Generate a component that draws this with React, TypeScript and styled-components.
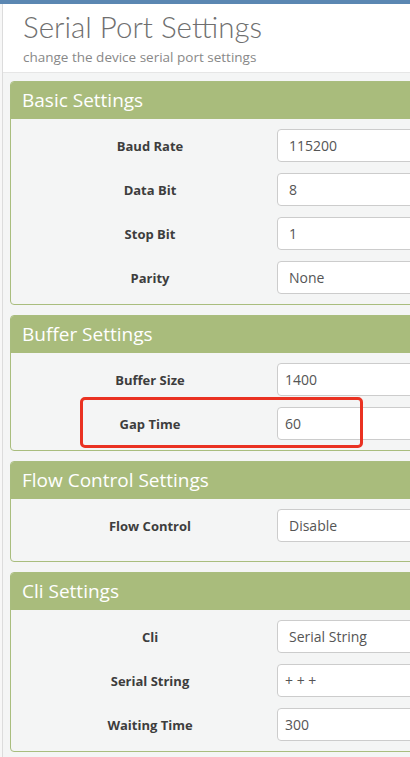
import React from "react";
import styled, { createGlobalStyle } from "styled-components";

const GlobalStyle = createGlobalStyle`
  html, body {
    margin: 0;
    padding: 0;
    background: #f4f5f5;
    overflow: hidden;
    font-family: "Open Sans", "Noto Sans", sans-serif;
  }
  * { box-sizing: border-box; }
`;

const TopBar = styled.div`
  height: 4px;
  background: #5b87b2;
`;

const Layout = styled.div`
  display: flex;
  align-items: stretch;
  min-height: 753px;
`;

const SideStrip = styled.div`
  width: 3px;
  flex: 0 0 3px;
  background: #f7f7f7;
  border-right: 1px solid #dcdcdc;
`;

const Main = styled.main`
  flex: 1;
  min-width: 0;
  overflow: hidden;
`;

const PageHeader = styled.header`
  background: #ffffff;
  border-bottom: 1px solid #e6e6e6;
  height: 69px;
  padding: 3px 0 0 20px;
`;

const Title = styled.h1`
  margin: 0;
  font-family: "Lato", "Open Sans", sans-serif;
  font-weight: 300;
  font-size: 29.5px;
  line-height: 40px;
  color: #6f6f6f;
  white-space: nowrap;
`;

const Subtitle = styled.p`
  margin: 0;
  font-size: 13.5px;
  line-height: 20px;
  color: #888888;
  white-space: nowrap;
`;

const Content = styled.div`
  display: flex;
  flex-direction: column;
  gap: 10px;
  padding: 8px 0 0 7px;
`;

const Panel = styled.section`
  width: 440px;
  border: 1px solid #a9bd7e;
  border-radius: 4px;
  background: #f4f5f5;
  overflow: hidden;
`;

const PanelHeading = styled.h2`
  margin: 0;
  height: 37px;
  background: #a9bc7c;
  color: #ffffff;
  font-weight: 400;
  font-size: 19px;
  line-height: 37px;
  padding-left: 11px;
  white-space: nowrap;
`;

const PanelBody = styled.div<{ $extraBottom?: number }>`
  display: flex;
  flex-direction: column;
  gap: 11px;
  padding: 10px 0 ${(p) => 10 + (p.$extraBottom ?? 0)}px 12px;
`;

const Row = styled.div`
  position: relative;
  display: grid;
  grid-template-columns: 254px 200px;
  align-items: center;
  height: 33px;
`;

const Label = styled.label`
  text-align: center;
  font-weight: 700;
  font-size: 13px;
  color: #3d3d3d;
  white-space: nowrap;
`;

const Field = styled.div<{ $select?: boolean }>`
  height: 33px;
  background: #ffffff;
  border: 1px solid #cccccc;
  border-radius: 4px;
  font-size: 14px;
  line-height: 31px;
  color: #555555;
  padding-left: ${(p) => (p.$select ? 11 : 7)}px;
  white-space: nowrap;
`;

const Highlight = styled.div`
  position: absolute;
  left: 57px;
  top: -10px;
  width: 283px;
  height: 51px;
  border: 3px solid #ea3222;
  border-radius: 5px;
  pointer-events: none;
`;

type RowData = { label: string; value: string; select?: boolean; highlight?: boolean };
type PanelData = { title: string; rows: RowData[]; extraBottom?: number };

const panels: PanelData[] = [
  {
    title: "Basic Settings",
    rows: [
      { label: "Baud Rate", value: "115200", select: true },
      { label: "Data Bit", value: "8", select: true },
      { label: "Stop Bit", value: "1", select: true },
      { label: "Parity", value: "None", select: true },
    ],
  },
  {
    title: "Buffer Settings",
    rows: [
      { label: "Buffer Size", value: "1400" },
      { label: "Gap Time", value: "60", highlight: true },
    ],
  },
  {
    title: "Flow Control Settings",
    rows: [{ label: "Flow Control", value: "Disable", select: true }],
    extraBottom: 9,
  },
  {
    title: "Cli Settings",
    rows: [
      { label: "Cli", value: "Serial String", select: true },
      { label: "Serial String", value: "+ + +" },
      { label: "Waiting Time", value: "300" },
    ],
  },
];

export default function App() {
  return (
    <>
      <GlobalStyle />
      <TopBar />
      <Layout>
        <SideStrip />
        <Main>
          <PageHeader>
            <Title>Serial Port Settings</Title>
            <Subtitle>change the device serial port settings</Subtitle>
          </PageHeader>
          <Content>
            {panels.map((panel) => (
              <Panel key={panel.title}>
                <PanelHeading>{panel.title}</PanelHeading>
                <PanelBody $extraBottom={panel.extraBottom}>
                  {panel.rows.map((row) => (
                    <Row key={row.label}>
                      <Label>{row.label}</Label>
                      <Field $select={row.select}>{row.value}</Field>
                      {row.highlight && <Highlight />}
                    </Row>
                  ))}
                </PanelBody>
              </Panel>
            ))}
          </Content>
        </Main>
      </Layout>
    </>
  );
}
